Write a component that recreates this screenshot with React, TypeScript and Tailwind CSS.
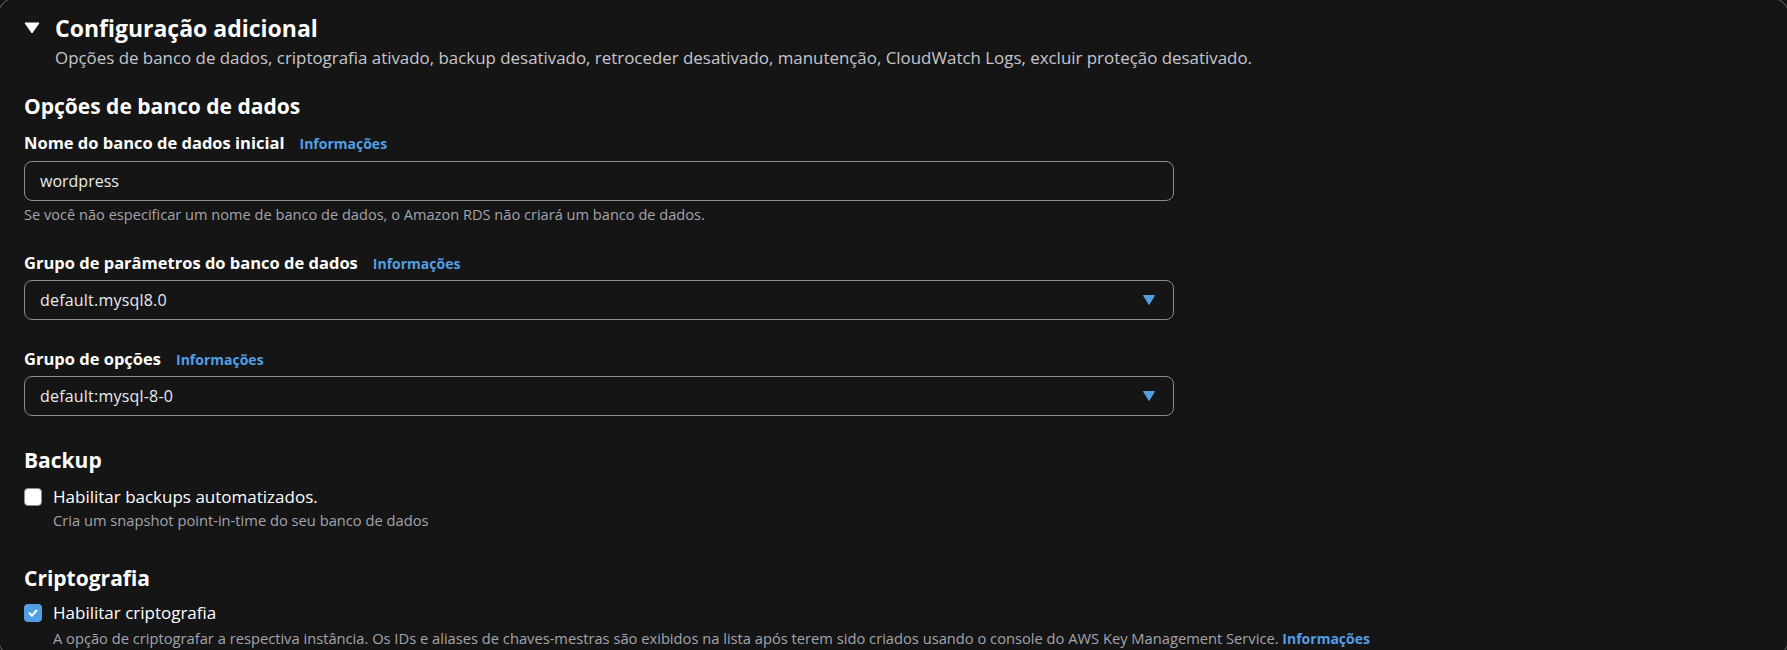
import React from "react";

const font = { fontFamily: '"Open Sans", "Liberation Sans", sans-serif' };

function Info() {
  return <span className="ml-[15px] text-[14px] font-bold text-[#539fe5]">Informações</span>;
}

function Caret() {
  return (
    <svg width="12" height="10" viewBox="0 0 12 10" className="shrink-0">
      <path d="M0.5 0.5 H11.5 L6 9.5 Z" fill="#539fe5" stroke="#539fe5" strokeLinejoin="round" />
    </svg>
  );
}

function Select({ value }: { value: string }) {
  return (
    <div className="flex h-[40px] w-[1150px] items-center justify-between rounded-[8px] border border-[#8c8c94] pl-[15px] pr-[18px] text-[16px] tracking-[0.2px] text-[#e9ebed]">
      <span>{value}</span>
      <Caret />
    </div>
  );
}

export default function App() {
  return (
    <div className="min-h-[650px] w-full overflow-hidden bg-[#151515]" style={font}>
      <div className="-mx-[3px] -mt-[3px] min-h-[660px] rounded-[20px] border border-[#6b6b73] pl-[26px] pt-[15px]">
        <div className="flex items-center gap-[15px]">
          <svg width="16" height="12" viewBox="0 0 16 12">
            <path d="M1 1 H15 L8 11 Z" fill="#ffffff" stroke="#ffffff" strokeLinejoin="round" />
          </svg>
          <h2 className="text-[23px] font-bold leading-[30px] text-white">Configuração adicional</h2>
        </div>
        <p className="ml-[31px] mt-[4px] text-[16.9px] leading-[22px] text-[#c6c6cd]">
          Opções de banco de dados, criptografia ativado, backup desativado, retroceder desativado, manutenção, CloudWatch Logs, excluir proteção desativado.
        </p>

        <h3 className="mt-[23px] text-[21px] font-bold leading-[28px] text-white">Opções de banco de dados</h3>

        <div className="mt-[12px] flex items-baseline text-[16.5px] font-bold leading-[22px] text-white">
          Nome do banco de dados inicial<Info />
        </div>
        <div className="mt-[6px] flex h-[40px] w-[1150px] items-center rounded-[8px] border border-[#8c8c94] pl-[15px] text-[16px] text-[#e9ebed]">
          wordpress
        </div>
        <p className="mt-[4px] text-[14.6px] leading-[18px] text-[#a4a4ad]">
          Se você não especificar um nome de banco de dados, o Amazon RDS não criará um banco de dados.
        </p>

        <div className="mt-[29px] flex items-baseline text-[16.5px] font-bold leading-[22px] text-white">
          Grupo de parâmetros do banco de dados<Info />
        </div>
        <div className="mt-[5px]">
          <Select value="default.mysql8.0" />
        </div>

        <div className="mt-[28px] flex items-baseline text-[16.5px] font-bold leading-[22px] text-white">
          Grupo de opções<Info />
        </div>
        <div className="mt-[5px]">
          <Select value="default:mysql-8-0" />
        </div>

        <h3 className="mt-[30px] text-[21px] font-bold leading-[28px] text-white">Backup</h3>
        <div className="mt-[12px] flex gap-[11px]">
          <div className="mt-[2px] h-[18px] w-[18px] shrink-0 rounded-[4px] border border-[#8c8c94] bg-white" />
          <div>
            <div className="text-[17px] leading-[22px] text-white">Habilitar backups automatizados.</div>
            <div className="mt-[2px] text-[14.7px] leading-[20px] text-[#a4a4ad]">Cria um snapshot point-in-time do seu banco de dados</div>
          </div>
        </div>

        <h3 className="mt-[34px] text-[21px] font-bold leading-[28px] text-white">Criptografia</h3>
        <div className="mt-[10px] flex gap-[11px]">
          <div className="mt-[2px] flex h-[18px] w-[18px] shrink-0 items-center justify-center rounded-[4px] bg-[#539fe5]">
            <svg width="12" height="12" viewBox="0 0 12 12">
              <path d="M2.5 6.2 L5 8.7 L9.5 3.5" fill="none" stroke="#ffffff" strokeWidth="2" strokeLinecap="round" strokeLinejoin="round" />
            </svg>
          </div>
          <div>
            <div className="text-[17px] leading-[22px] text-white">Habilitar criptografia</div>
            <div className="mt-[4px] text-[14.7px] leading-[20px] text-[#a4a4ad]">
              A opção de criptografar a respectiva instância. Os IDs e aliases de chaves-mestras são exibidos na lista após terem sido criados usando o console do AWS Key Management Service.{" "}
              <span className="text-[14px] font-bold text-[#539fe5]">Informações</span>
            </div>
          </div>
        </div>
      </div>
    </div>
  );
}
